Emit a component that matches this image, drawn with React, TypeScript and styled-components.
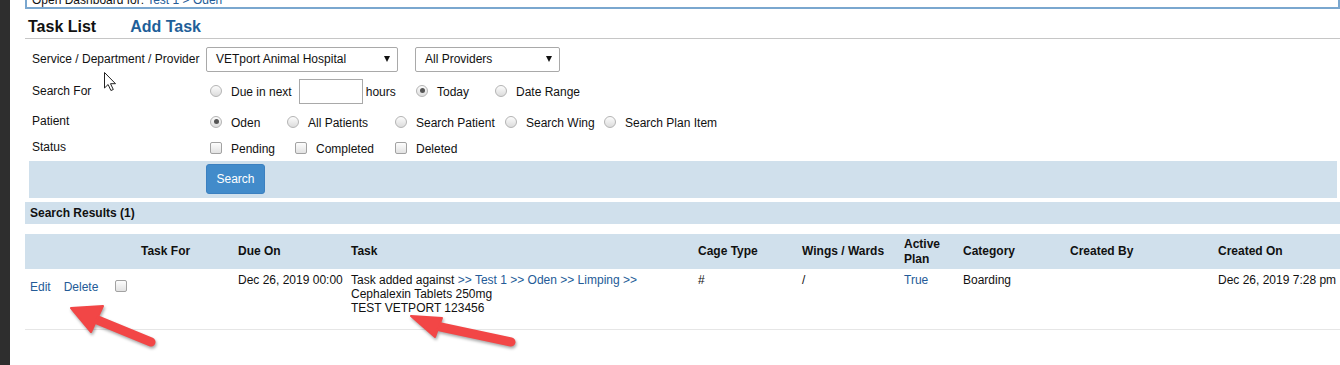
import React from 'react';
import styled, { createGlobalStyle } from 'styled-components';

const GlobalStyle = createGlobalStyle`
    body {
        margin: 0;
        background: #fff;
        font-family: "Liberation Sans", Arial, sans-serif;
        font-size: 12px;
        color: #111;
    }
`
const Page = styled.div`
    position: relative;
    display: flex;
    height: 365px;
    overflow: hidden;
    background: #fff;
`
const SideStrip = styled.div`
    flex: 0 0 10px;
    background: #2e2e2e;
`
const Main = styled.div`
    flex: 1;
    min-width: 0;
    padding-left: 15px;
`
const DashboardBox = styled.div`
    margin-top: -9px;
    padding: 0 5px;
    line-height: 14px;
    border: 2px solid #7aa7cf;
`
const BlueText = styled.span`
    color: #245b97;
`
const TabBar = styled.div`
    display: flex;
    gap: 34px;
    padding: 8px 0 1px 3px;
    border-bottom: 1px solid #c6c6c6;
`
const Tab = styled.span<{ $active?: boolean }>`
    font-size: 16px;
    font-weight: 700;
    line-height: 20px;
    color: ${p => p.$active ? '#111' : '#1f5f99'};
`
const Form = styled.div`
    padding-top: 4px;
`
const FormRow = styled.div<{ $h: number }>`
    display: flex;
    align-items: center;
    height: ${p => p.$h}px;
`
const FieldLabel = styled.div`
    flex: 0 0 174px;
    padding-left: 7px;
`
const Controls = styled.div`
    display: flex;
    align-items: center;
    gap: 17px;
`
const OptionGroup = styled.div<{ $shift?: number }>`
    display: flex;
    align-items: center;
    padding-left: 4px;
    padding-top: ${p => p.$shift || 0}px;
`
const SelectBox = styled.div<{ $w: number }>`
    display: flex;
    align-items: center;
    justify-content: space-between;
    box-sizing: border-box;
    width: ${p => p.$w}px;
    height: 25px;
    padding: 0 7px 0 9px;
    border: 1px solid #a9a9a9;
    border-radius: 2px;
    background: #fff;
`
const Caret = styled.span`
    width: 0;
    height: 0;
    border-left: 3.5px solid transparent;
    border-right: 3.5px solid transparent;
    border-top: 6px solid #111;
`
const Option = styled.label<{ $w?: number }>`
    display: flex;
    align-items: center;
    width: ${p => p.$w ? p.$w + 'px' : 'auto'};
`
const Radio = styled.span<{ $checked?: boolean }>`
    position: relative;
    top: -1px;
    box-sizing: border-box;
    width: 12px;
    height: 12px;
    border-radius: 50%;
    border: 1px solid #b4b4b4;
    background: linear-gradient(#fcfcfc, #dcdcdc);
    &::after {
        content: '';
        display: ${p => p.$checked ? 'block' : 'none'};
        position: absolute;
        left: 2.5px;
        top: 2.5px;
        width: 5px;
        height: 5px;
        border-radius: 50%;
        background: #555;
    }
`
const Check = styled.span`
    position: relative;
    top: -1px;
    box-sizing: border-box;
    width: 12px;
    height: 12px;
    border-radius: 2px;
    border: 1px solid #a2a2a2;
    background: linear-gradient(#fdfdfd, #e2e2e2);
`
const OptionText = styled.span`
    margin-left: 9px;
`
const HoursInput = styled.div`
    box-sizing: border-box;
    width: 64px;
    height: 25px;
    margin: 0 3px 0 7px;
    border: 1px solid #a9a9a9;
`
const SearchBand = styled.div`
    margin: 1px 3px 0 4px;
    padding: 3px 0 4px 177px;
    background: #d0e0ec;
`
const SearchButton = styled.button`
    width: 59px;
    height: 30px;
    padding: 0;
    border: 1px solid #3b80c0;
    border-radius: 3px;
    background: #428bca;
    color: #fff;
    font-family: inherit;
    font-size: 12px;
`
const ResultsBar = styled.div`
    margin-top: 4px;
    height: 22px;
    padding-left: 5px;
    line-height: 22px;
    font-weight: 700;
    background: #d0e0ec;
`
const Table = styled.table`
    margin-top: 10px;
    width: 100%;
    border-collapse: collapse;
    table-layout: fixed;
`
const Th = styled.th`
    height: 35px;
    padding: 0 5px;
    text-align: left;
    font-weight: 700;
    line-height: 15px;
    background: #d0e0ec;
`
const Td = styled.td<{ $top?: number }>`
    padding: ${p => p.$top ?? 4}px 5px 14px;
    vertical-align: top;
    line-height: 14px;
    white-space: nowrap;
    border-bottom: 1px solid #e6e6e6;
`
const Actions = styled.div`
    display: flex;
    align-items: center;
`
const Link = styled.a<{ $gap?: number }>`
    color: #245b97;
    text-decoration: none;
    margin-right: ${p => p.$gap || 0}px;
`
const Overlay = styled.svg`
    position: absolute;
    left: 0;
    top: 0;
    pointer-events: none;
`

const columns = [
    { title: '', w: 111 },
    { title: 'Task For', w: 97 },
    { title: 'Due On', w: 113 },
    { title: 'Task', w: 347 },
    { title: 'Cage Type', w: 104 },
    { title: 'Wings / Wards', w: 102 },
    { title: 'Active Plan', w: 59 },
    { title: 'Category', w: 107 },
    { title: 'Created By', w: 148 },
    { title: 'Created On', w: 127 },
]

const patientOptions = [
    { label: 'Oden', w: 77, checked: true },
    { label: 'All Patients', w: 108 },
    { label: 'Search Patient', w: 110 },
    { label: 'Search Wing', w: 99 },
    { label: 'Search Plan Item' },
]

const statusOptions = [
    { label: 'Pending', w: 85 },
    { label: 'Completed', w: 100 },
    { label: 'Deleted' },
]

function Arrow({ tip, b1, b2, tail, neck }: { tip: number[], b1: number[], b2: number[], tail: number[], neck: number[] }) {
    return (
        <g style={{ filter: 'drop-shadow(1px 2px 1.5px rgba(0,0,0,0.35))' }}>
            <line x1={tail[0]} y1={tail[1]} x2={neck[0]} y2={neck[1]} stroke="#f24646" strokeWidth={9} strokeLinecap="round" />
            <polygon points={`${tip.join(',')} ${b1.join(',')} ${b2.join(',')}`} fill="#f24646" stroke="#f24646" strokeWidth={2} strokeLinejoin="round" />
        </g>
    )
}

export default function App() {
    return (
        <>
            <GlobalStyle />
            <Page>
                <SideStrip />
                <Main>
                    <DashboardBox>
                        Open Dashboard for: <BlueText>Test 1 &gt; Oden</BlueText>
                    </DashboardBox>
                    <TabBar>
                        <Tab $active>Task List</Tab>
                        <Tab>Add Task</Tab>
                    </TabBar>
                    <Form>
                        <FormRow $h={32}>
                            <FieldLabel>Service / Department / Provider</FieldLabel>
                            <Controls>
                                <SelectBox $w={192}>VETport Animal Hospital<Caret /></SelectBox>
                                <SelectBox $w={145}>All Providers<Caret /></SelectBox>
                            </Controls>
                        </FormRow>
                        <FormRow $h={32}>
                            <FieldLabel>Search For</FieldLabel>
                            <OptionGroup $shift={1}>
                                <Option $w={206}>
                                    <Radio />
                                    <OptionText>Due in next</OptionText>
                                    <HoursInput />
                                    hours
                                </Option>
                                <Option $w={79}><Radio $checked /><OptionText>Today</OptionText></Option>
                                <Option><Radio /><OptionText>Date Range</OptionText></Option>
                            </OptionGroup>
                        </FormRow>
                        <FormRow $h={27}>
                            <FieldLabel>Patient</FieldLabel>
                            <OptionGroup $shift={4}>
                                {patientOptions.map(o => (
                                    <Option key={o.label} $w={o.w}>
                                        <Radio $checked={o.checked} />
                                        <OptionText>{o.label}</OptionText>
                                    </Option>
                                ))}
                            </OptionGroup>
                        </FormRow>
                        <FormRow $h={26}>
                            <FieldLabel>Status</FieldLabel>
                            <OptionGroup $shift={4}>
                                {statusOptions.map(o => (
                                    <Option key={o.label} $w={o.w}>
                                        <Check />
                                        <OptionText>{o.label}</OptionText>
                                    </Option>
                                ))}
                            </OptionGroup>
                        </FormRow>
                    </Form>
                    <SearchBand>
                        <SearchButton>Search</SearchButton>
                    </SearchBand>
                    <ResultsBar>Search Results (1)</ResultsBar>
                    <Table>
                        <colgroup>
                            {columns.map((c, i) => <col key={i} style={{ width: c.w }} />)}
                        </colgroup>
                        <thead>
                            <tr>
                                {columns.map((c, i) => <Th key={i}>{c.title}</Th>)}
                            </tr>
                        </thead>
                        <tbody>
                            <tr>
                                <Td $top={11}>
                                    <Actions>
                                        <Link href="#" $gap={13}>Edit</Link>
                                        <Link href="#" $gap={17}>Delete</Link>
                                        <Check />
                                    </Actions>
                                </Td>
                                <Td></Td>
                                <Td>Dec 26, 2019 00:00</Td>
                                <Td>
                                    Task added against <BlueText>&gt;&gt; Test 1 &gt;&gt; Oden &gt;&gt; Limping &gt;&gt;</BlueText><br />
                                    Cephalexin Tablets 250mg<br />
                                    TEST VETPORT 123456
                                </Td>
                                <Td>#</Td>
                                <Td>/</Td>
                                <Td><BlueText>True</BlueText></Td>
                                <Td>Boarding</Td>
                                <Td></Td>
                                <Td>Dec 26, 2019 7:28 pm</Td>
                            </tr>
                        </tbody>
                    </Table>
                </Main>
                <Overlay width={1340} height={365} viewBox="0 0 1340 365">
                    <Arrow tip={[71, 308]} b1={[103, 306]} b2={[91, 332]} neck={[95, 319]} tail={[151, 342]} />
                    <Arrow tip={[411, 316]} b1={[442, 318]} b2={[435, 337]} neck={[436, 326]} tail={[511, 342]} />
                    <path
                        transform="translate(104.5,72.5)"
                        d="M0 0 L0 15.5 L3.6 12 L6.4 18 L8.8 17 L6 11.2 L11 11.2 Z"
                        fill="#fff"
                        stroke="#222"
                        strokeWidth={1}
                        strokeLinejoin="round"
                    />
                </Overlay>
            </Page>
        </>
    );
}
